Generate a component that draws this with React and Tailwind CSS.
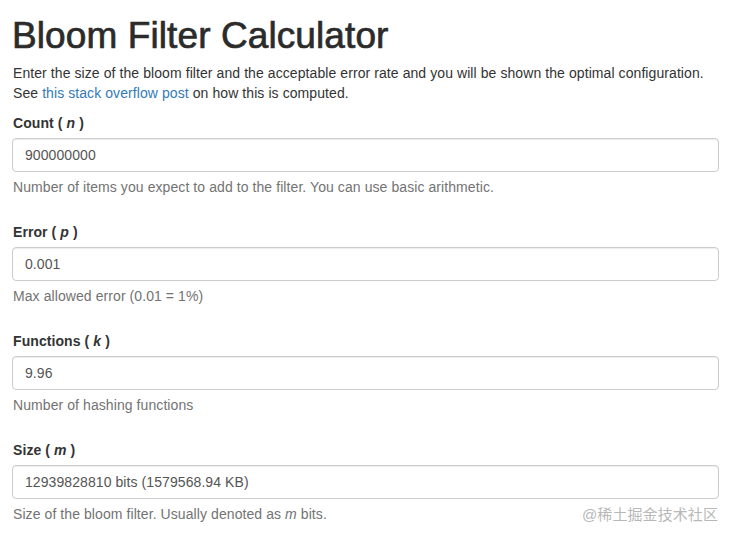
const fields = [
  {
    label: 'Count',
    sym: 'n',
    value: '900000000',
    help: <>Number of items you expect to add to the filter. You can use basic arithmetic.</>,
  },
  { label: 'Error', sym: 'p', value: '0.001', help: <>Max allowed error (0.01 = 1%)</> },
  { label: 'Functions', sym: 'k', value: '9.96', help: <>Number of hashing functions</> },
  {
    label: 'Size',
    sym: 'm',
    value: '12939828810 bits (1579568.94 KB)',
    help: (
      <>
        Size of the bloom filter. Usually denoted as <em>m</em> bits.
      </>
    ),
  },
];

export default function App() {
  return (
    <div
      className="relative w-[735px] h-[541px] overflow-hidden bg-white pl-[12px] pr-[16px] text-[14px] leading-[20px] tracking-[0.08px] text-[#333]"
      style={{ fontFamily: '"Liberation Sans", Arial, sans-serif' }}
    >
      <h1 className="mt-[15px] mb-[6px] text-[37px] leading-[42px] font-normal text-[#2b2b2b] tracking-[0.1px] [-webkit-text-stroke:0.7px_#2b2b2b]">
        Bloom Filter Calculator
      </h1>
      <p className="mb-[10px] pl-[1px]">
        Enter the size of the bloom filter and the acceptable error rate and you will be shown the optimal configuration.
        <br />
        See <a className="text-[#337ab7]">this stack overflow post</a> on how this is computed.
      </p>

      {fields.map((f) => (
        <div key={f.label} className="flex flex-col mb-[25px]">
          <label className="block mb-[5px] pl-[1px] font-bold">
            {f.label} ( <em>{f.sym}</em> )
          </label>
          <div className="h-[34px] flex items-center px-[12px] border border-[#ccc] rounded-[4px] text-[#555] shadow-[inset_0_1px_1px_rgba(0,0,0,0.075)]">
            {f.value}
          </div>
          <p className="mt-[5px] pl-[1px] text-[#737373]">{f.help}</p>
        </div>
      ))}

      <div
        className="absolute right-[17px] bottom-[16px] text-[15px] leading-[20px] text-[#b8b8b8]"
        style={{ fontFamily: '"Liberation Sans", "Noto Sans CJK SC", sans-serif' }}
      >
        @稀土掘金技术社区
      </div>
    </div>
  );
}
